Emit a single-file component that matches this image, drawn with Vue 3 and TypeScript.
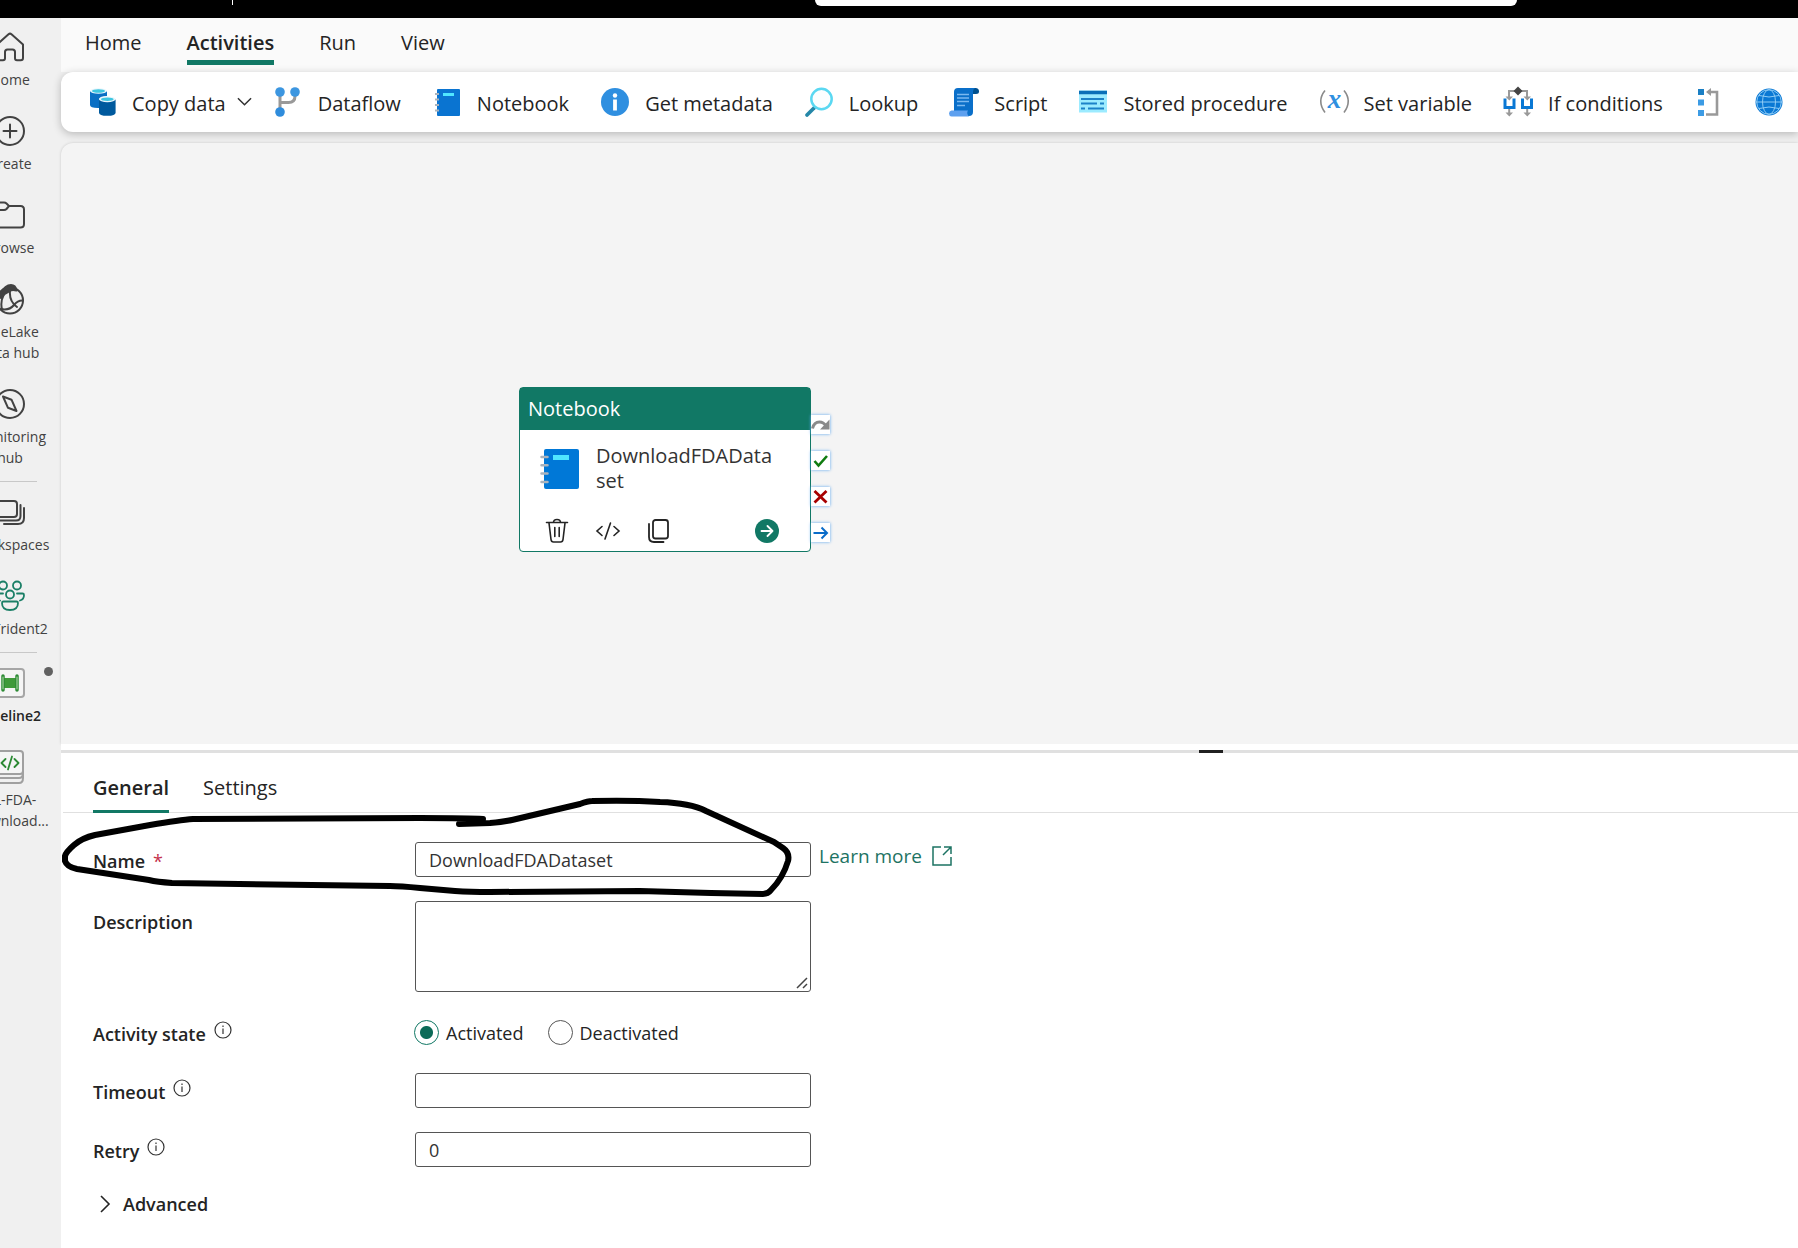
<script setup lang="ts">
import { ref } from 'vue'

type NavItem = { id: string; lines: string[]; active?: boolean; ruleAfter?: boolean }
type Tool = { id: string; label: string; menu?: boolean }

const navItems: NavItem[] = [
  { id: 'home', lines: ['Home'] },
  { id: 'create', lines: ['Create'] },
  { id: 'browse', lines: ['Browse'] },
  { id: 'onelake', lines: ['OneLake', 'data hub'] },
  { id: 'monitor', lines: ['Monitoring', 'hub'], ruleAfter: true },
  { id: 'workspaces', lines: ['Workspaces'] },
  { id: 'people', lines: ['FA-Trident2'], ruleAfter: true },
  { id: 'pipeline', lines: ['Pipeline2'], active: true },
  { id: 'notebook', lines: ['DL-FDA-', 'Download...'] },
]

const ribbonTabs = ['Home', 'Activities', 'Run', 'View']
const activeRibbon = ref('Activities')

const tools: Tool[] = [
  { id: 'copy', label: 'Copy data', menu: true },
  { id: 'dataflow', label: 'Dataflow' },
  { id: 'notebook', label: 'Notebook' },
  { id: 'info', label: 'Get metadata' },
  { id: 'lookup', label: 'Lookup' },
  { id: 'script', label: 'Script' },
  { id: 'stored', label: 'Stored procedure' },
  { id: 'variable', label: 'Set variable' },
  { id: 'if', label: 'If conditions' },
  { id: 'until', label: '' },
  { id: 'web', label: '' },
]

const panelTabs = ['General', 'Settings']
const activePanel = ref('General')

const name = ref('DownloadFDADataset')
const description = ref('')
const state = ref('activated')
const timeout = ref('')
const retry = ref('0')
</script>

<template>
  <div class="app">
    <header class="topbar">
      <span class="topbar-rule"></span>
      <input class="search" type="text" aria-label="Search" />
    </header>

    <div class="body">
      <aside class="sidebar">
        <nav class="nav">
          <template v-for="item in navItems" :key="item.id">
            <a href="#" class="nav-item" :class="{ active: item.active }">
              <svg class="nav-icon" viewBox="0 0 30 30" fill="none" stroke="#424242" stroke-width="2" stroke-linecap="round" stroke-linejoin="round">
                <path v-if="item.id === 'home'" d="M2 12.500 13.500 2.200q1.500-1.200 3 0L28 12.500V26q0 2.300-2.300 2.300H22q-2 0-2-2V20q0-2.500-2.500-2.500h-5Q10 17.500 10 20v6.300q0 2-2 2H4.300Q2 28.300 2 26Z" />
                <g v-else-if="item.id === 'create'">
                  <circle cx="15" cy="15" r="14" />
                  <path d="M15 8.500v13M8.500 15h13" />
                </g>
                <path v-else-if="item.id === 'browse'" d="M1 6q0-3.500 3.500-3.500H9q1.500 0 2.500 1L14 6h11.500Q29 6 29 9.500V24q0 3.500-3.500 3.500h-21Q1 27.500 1 24ZM1 10h8q1.500 0 2.500-1L14 6" />
                <g v-else-if="item.id === 'onelake'">
                  <circle cx="15" cy="16.500" r="13" />
                  <path d="M6 9Q10 1 16 1q4.500 0 5.500 5.500Q16 5 13 8 8 10 6 14Z" fill="#424242" />
                  <path d="M15 7q-1 10 7 16M9 10q-4 8-2 15M6 25q8 2 13-4 4-5 9-4.500" />
                </g>
                <g v-else-if="item.id === 'monitor'">
                  <circle cx="15" cy="15" r="14" />
                  <path d="m8 7.500 8.500 3.200 5 11.300-8.500-3.200Z" />
                </g>
                <g v-else-if="item.id === 'workspaces'">
                  <rect x="-2" y="4" width="24" height="16" rx="3" />
                  <path d="M25.500 8v11q0 4.500-4.500 4.500H5M29 11v10q0 6-6 6H9" />
                </g>
                <g v-else-if="item.id === 'people'" stroke="#1a7f66" stroke-width="1.800">
                  <circle cx="8" cy="4.500" r="4" />
                  <circle cx="22" cy="4.500" r="4" />
                  <circle cx="15" cy="13.500" r="4" />
                  <path d="M8.500 20.500h13q1.500 0 1.500 1.500 0 7-8 7t-8-7q0-1.500 1.500-1.500ZM22 12.500h5.500q1.500 0 1.500 1.500 0 4.500-4 5.500M8 12.500H2.500Q1 12.500 1 14q0 4.500 4 5.500" />
                </g>
                <g v-else-if="item.id === 'pipeline'">
                  <rect x="1" y="1" width="28" height="28" rx="3" fill="#f5f5f5" stroke="#a6a6a6" />
                  <rect x="9" y="10" width="12" height="10" fill="#3f9a3a" stroke="none" />
                  <path d="M8 8v14M22 8v14" stroke="#2c8a34" stroke-width="3.500" />
                  <path d="M8 9v12M22 9v12" stroke="#b9e0b0" stroke-width="1" />
                </g>
                <g v-else>
                  <path d="M1 26q1 5 5 5h18q4 0 4-5V12" stroke="#a0a0a0" />
                  <path d="M1 21q1 5 5 5h18q4 0 4-5" stroke="#a0a0a0" />
                  <rect x="1" y="-1" width="27" height="23" rx="3" fill="#f5f5f5" stroke="#a0a0a0" />
                  <path d="m10.500 7-4 4 4 4M19.500 7l4 4-4 4M17 4.500l-4 13" stroke="#2c8a34" stroke-width="1.800" />
                </g>
              </svg>
              <span v-for="line in item.lines" :key="line" class="nav-line">{{ line }}</span>
              <span v-if="item.active" class="unsaved"></span>
            </a>
            <hr v-if="item.ruleAfter" class="nav-rule" />
          </template>
        </nav>
      </aside>

      <main class="main">
        <div class="ribbon-tabs" role="tablist">
          <button v-for="tab in ribbonTabs" :key="tab" type="button" role="tab" class="ribbon-tab" :class="{ active: tab === activeRibbon }" :aria-selected="tab === activeRibbon" @click="activeRibbon = tab">{{ tab }}</button>
        </div>

        <div class="toolbar">
          <button v-for="tool in tools" :key="tool.id" type="button" class="tool" :class="{ menu: tool.menu }" :aria-label="tool.label || tool.id">
            <svg class="tool-icon" viewBox="0 0 28 28" fill="none">
              <g v-if="tool.id === 'copy'">
                <path d="M1 3v14q0 3 8 3h1V11q1-3 8-3V3Z" fill="#0a6fc4" />
                <ellipse cx="9.500" cy="3" rx="8.500" ry="2.800" fill="#e8f6fc" />
                <ellipse cx="9.500" cy="3" rx="6.500" ry="1.700" fill="#3ec6e0" />
                <path d="M10 11.500v13.200q0 3.100 8.300 3.100t8.300-3.100V11.500Z" fill="#005a9e" />
                <ellipse cx="18.300" cy="11.300" rx="8.300" ry="2.900" fill="#e8f6fc" />
                <ellipse cx="18.300" cy="11.300" rx="6.300" ry="1.700" fill="#3ec6e0" />
              </g>
              <g v-else-if="tool.id === 'dataflow'">
                <path d="M6 5v18M21 5v3q0 6.500-6.500 6.500H6" stroke="#999" stroke-width="3" />
                <circle cx="6" cy="4" r="4.800" fill="#3c96e0" />
                <circle cx="21" cy="4" r="4.800" fill="#3c96e0" />
                <circle cx="6" cy="24" r="4.800" fill="#2f8cdc" />
              </g>
              <g v-else-if="tool.id === 'notebook'">
                <rect x="4" y="1" width="23" height="27" rx="1" fill="#0a74d1" />
                <rect x="10" y="5" width="11" height="3" fill="#50e6ff" />
                <path d="M2 6h4M2 11.500h4M2 17h4M2 22.500h4" stroke="#a9b3bd" stroke-width="2" />
              </g>
              <g v-else-if="tool.id === 'info'">
                <circle cx="14" cy="14" r="14" fill="#2f8fe0" />
                <circle cx="14" cy="7.500" r="2.200" fill="#fff" />
                <path d="M14 11.500v11" stroke="#fff" stroke-width="3.800" />
              </g>
              <g v-else-if="tool.id === 'lookup'">
                <path d="M9 20 2 27" stroke="#2587a8" stroke-width="3.800" stroke-linecap="round" />
                <circle cx="16.500" cy="11" r="10.200" stroke="#5ad8f2" stroke-width="2.500" fill="#fbfeff" />
              </g>
              <g v-else-if="tool.id === 'script'">
                <path d="M23 0h2.500Q29 0 29 3.500 29 6 26 6h-3Z" fill="#00508f" />
                <path d="M4 4q0-4 4-4h17q-2 1-2 4v20q0 4-4 4H4Z" fill="#0a6fc9" />
                <path d="M1.500 22.500H18q-2 3 1 6H1.500Q-1 28-1 25.500t2.500-3Z" fill="#5ea0ef" />
                <path d="M7 6.500h12M7 10h12M7 13.500h12M7 17.500h8" stroke="#7ab8f0" stroke-width="1.500" />
              </g>
              <g v-else-if="tool.id === 'stored'">
                <rect x="0" y="2.500" width="28" height="22" fill="#9cebff" />
                <path d="M0 4.500h28" stroke="#0a6fb8" stroke-width="3.500" />
                <path d="M2 11h23M2 15.500h16M21 15.500h4M2 20.500h4M9 20.500h16" stroke="#1c82c8" stroke-width="1.800" />
              </g>
              <g v-else-if="tool.id === 'variable'">
                <path d="M5 2.500Q-3.500 13 5 24.500M24 2.500q8.500 10.500 0 22" stroke="#8a8a8a" stroke-width="1.600" />
                <text x="14.500" y="20" class="glyph-x" text-anchor="middle" fill="#2f8fe0">x</text>
              </g>
              <g v-else-if="tool.id === 'if'">
                <path d="M5 11V3h18v8" stroke="#999" stroke-width="2" />
                <path d="M1.500 8.500h7.500l-3.700 4ZM19.500 8.500H27l-3.700 4ZM1.500 24.500h7.500l-3.700 4ZM19.500 24.500H27l-3.700 4Z" fill="#999" />
                <path d="M5.200 19v7M23.200 19v7" stroke="#999" stroke-width="2" />
                <path d="M2.500 12H1v7.500h9V12H8.500M20 12h-1.500v7.500h9V12H26" stroke="#0a78d4" stroke-width="3" />
                <path d="m14-1.500 4.500 4.500-4.500 4.500-4.500-4.500Z" fill="#444" />
              </g>
              <g v-else-if="tool.id === 'until'">
                <path d="M3 1h6v6H3Z" fill="#1a7fc4" />
                <path d="M3 11.500h6v6H3ZM3 22h6v6H3Z" fill="#3c9be4" />
                <path d="M14 4h8v22.500H11" stroke="#999" stroke-width="2.600" />
                <path d="M16 0v8l-5-4Z" fill="#999" />
              </g>
              <g v-else>
                <circle cx="14" cy="14" r="13.500" fill="#0a78d4" />
                <g stroke="#8ecbf5" stroke-width="1">
                  <circle cx="14" cy="14" r="12.300" />
                  <ellipse cx="14" cy="14" rx="6.500" ry="12.300" />
                  <path d="M1 14h26M4 7.500q10 3 20 0M4 20.500q10-3 20 0" />
                </g>
              </g>
            </svg>
            <span v-if="tool.label" class="tool-label">{{ tool.label }}</span>
            <svg v-if="tool.menu" class="chevron" viewBox="0 0 16 10" fill="none" stroke="#333" stroke-width="1.600"><path d="m1 1 7 7 7-7" /></svg>
          </button>
        </div>

        <section class="canvas" aria-label="Pipeline canvas">
          <article class="node">
            <h2 class="node-head">Notebook</h2>
            <div class="node-body">
              <svg class="node-icon" viewBox="0 0 40 40" fill="none">
                <rect x="4" y="0" width="35" height="40" rx="2" fill="#0078d7" />
                <rect x="13" y="6" width="16" height="5" fill="#50e6ff" />
                <path d="M1.500 8h6M1.500 16.300h6M1.500 24.600h6M1.500 33h6" stroke="#a9b3bd" stroke-width="2.500" stroke-linecap="round" />
              </svg>
              <span class="node-name">{{ name }}</span>
            </div>
            <div class="node-actions">
              <button type="button" aria-label="Delete">
                <svg viewBox="0 0 24 24" fill="none" stroke="#242424" stroke-width="1.600" stroke-linecap="round"><path d="M1.500 3.500h21M8.500 3.500q0-3 3.500-3t3.500 3M4 4l2 16.500Q6.300 23 8.500 23h7q2.200 0 2.500-2.500L20 4M9.800 8.500v9M14.200 8.500v9" /></svg>
              </button>
              <button type="button" aria-label="View code">
                <svg viewBox="0 0 24 24" fill="none" stroke="#242424" stroke-width="1.600" stroke-linecap="round"><path d="m6 7.500-5 4.500 5 4.500M18 7.500l5 4.500-5 4.500M14.500 4l-5.500 16" /></svg>
              </button>
              <button type="button" aria-label="Clone">
                <svg viewBox="0 0 24 24" fill="none" stroke="#242424" stroke-width="1.800" stroke-linecap="round"><rect x="6" y="1" width="15" height="18.500" rx="2.500" /><path d="M2 5v13q0 5 5 5h9.500" /></svg>
              </button>
              <button type="button" class="go" aria-label="Open">
                <svg viewBox="0 0 24 24" fill="none"><circle cx="12" cy="12" r="12" fill="#117865" /><path d="M6.500 12h11M12.500 7l5 5-5 5" stroke="#fff" stroke-width="1.800" stroke-linecap="round" stroke-linejoin="round" /></svg>
              </button>
            </div>
            <div class="ports">
              <svg class="port" viewBox="0 0 19 19" fill="none"><path d="M1.500 13.500Q3 7 8.500 7q4 0 6.500 4" stroke="#8a8a8a" stroke-width="3" /><path d="M18.500 4.500v10H9Z" fill="#8a8a8a" /></svg>
              <svg class="port" viewBox="0 0 19 19" fill="none"><path d="m3.500 10 4 4.500 8.500-9.500" stroke="#107c10" stroke-width="2.600" /></svg>
              <svg class="port" viewBox="0 0 19 19" fill="none"><path d="m3.500 4 12 11.500M15.500 4l-12 11.500" stroke="#a80000" stroke-width="2.800" /></svg>
              <svg class="port" viewBox="0 0 19 19" fill="none"><path d="M2.500 10h13M10.500 4.500l5.500 5.500-5.500 5.500" stroke="#0a6cc9" stroke-width="2" /></svg>
            </div>
          </article>
        </section>

        <div class="splitter"><span class="grip"></span></div>

        <section class="panel">
          <div class="panel-tabs" role="tablist">
            <button v-for="tab in panelTabs" :key="tab" type="button" role="tab" class="panel-tab" :class="{ active: tab === activePanel }" :aria-selected="tab === activePanel" @click="activePanel = tab">{{ tab }}</button>
          </div>

          <form class="form" @submit.prevent>
            <div class="row">
              <label class="label" for="f-name">Name <span class="required">*</span></label>
              <input id="f-name" v-model="name" class="field" type="text" />
              <a href="#" class="learn">Learn more
                <svg viewBox="0 0 20 20" fill="none" stroke="#1d7363" stroke-width="1.500"><path d="M9 1H1v18h18v-8M12 1h7v7M19 1l-8 8" /></svg>
              </a>
            </div>
            <div class="row top">
              <label class="label" for="f-desc">Description</label>
              <div class="area">
                <textarea id="f-desc" v-model="description" class="field"></textarea>
                <svg class="resize" viewBox="0 0 12 12" stroke="#444" stroke-width="1.500"><path d="M1 11 11 1M7 11l4-4" /></svg>
              </div>
            </div>
            <div class="row state" role="radiogroup" aria-label="Activity state">
              <span class="label">Activity state
                <svg class="hint" viewBox="0 0 18 18" fill="none" stroke="#333" stroke-width="1.200"><circle cx="9" cy="9" r="8" /><path d="M9 7.500v5.500M9 4.500v1.500" /></svg>
              </span>
              <label class="radio"><input v-model="state" type="radio" name="state" value="activated" />Activated</label>
              <label class="radio"><input v-model="state" type="radio" name="state" value="deactivated" />Deactivated</label>
            </div>
            <div class="row">
              <label class="label" for="f-timeout">Timeout
                <svg class="hint" viewBox="0 0 18 18" fill="none" stroke="#333" stroke-width="1.200"><circle cx="9" cy="9" r="8" /><path d="M9 7.500v5.500M9 4.500v1.500" /></svg>
              </label>
              <input id="f-timeout" v-model="timeout" class="field" type="text" />
            </div>
            <div class="row">
              <label class="label" for="f-retry">Retry
                <svg class="hint" viewBox="0 0 18 18" fill="none" stroke="#333" stroke-width="1.200"><circle cx="9" cy="9" r="8" /><path d="M9 7.500v5.500M9 4.500v1.500" /></svg>
              </label>
              <input id="f-retry" v-model="retry" class="field" type="text" />
            </div>
            <button type="button" class="advanced">
              <svg viewBox="0 0 10 18" fill="none" stroke="#242424" stroke-width="1.600"><path d="m1 1 8 8-8 8" /></svg>
              Advanced
            </button>
          </form>

          <!-- hand-drawn ring round the Name field -->
          <svg class="ink" viewBox="61 753 740 150" fill="none" stroke="#000" stroke-width="6" stroke-linecap="round" stroke-linejoin="round">
            <path d="M483 819 Q470 818 420 818 L193 819 Q180 820 150 825 L95 835 Q82 838 74 845 Q66 852 65 856 V861 Q67 867 77 869 L149 880 Q157 882 172 883 L390 886 Q400 886 420 888 L455 891 Q470 892 490 892 L640 891 L711 893 L763 894 Q768 894 771 890 Q783 878 788 861 Q790 853 783 848 L774 842 L706 811 Q690 803 660 802 Q630 800 592 801 Q588 801 580 804 L512 820 Q503 822 490 823 L459 824" />
          </svg>
        </section>
      </main>
    </div>
  </div>
</template>

<style>
body {
  margin: 0;
}
</style>

<style scoped>
.app {
  display: flex;
  flex-direction: column;
  min-height: 100vh;
  font-family: 'Open Sans', 'Noto Sans', sans-serif;
  font-size: 20px;
  line-height: 26px;
  color: #242424;
  background: #f0f0f0;
}
.app *,
.app *::before {
  box-sizing: border-box;
}
button {
  padding: 0;
  border: 0;
  background: none;
  font: inherit;
  color: inherit;
  white-space: nowrap;
}
a {
  text-decoration: none;
}
svg {
  flex: none;
  overflow: visible;
}

.topbar {
  display: flex;
  align-items: flex-start;
  height: 18px;
  padding-left: 232px;
  background: #000;
}
.topbar-rule {
  width: 1px;
  height: 5px;
  background: #fff;
}
.search {
  width: 45%;
  max-width: 702px;
  height: 6px;
  margin: 0 auto 0 582px;
  padding: 0;
  border: 0;
  border-radius: 0 0 6px 6px;
  background: #fff;
}

.body {
  display: flex;
  flex: 1;
}

.sidebar {
  flex: none;
  width: 61px;
  overflow: hidden;
}
.nav {
  width: 104px;
  margin-left: -42px;
}
.nav-item {
  position: relative;
  display: flex;
  flex-direction: column;
  align-items: center;
  padding: 14px 0 12px;
  font-size: 14px;
  line-height: 21px;
  color: #424242;
}
.nav-item.active {
  font-weight: 600;
  color: #242424;
}
.nav-icon {
  width: 30px;
  height: 30px;
  margin-bottom: 7px;
}
.nav-line {
  white-space: nowrap;
}
.nav-rule {
  width: 54px;
  height: 1px;
  margin: 1px auto;
  border: 0;
  background: #c8c8c8;
}
.unsaved {
  position: absolute;
  top: 13px;
  right: 9px;
  width: 9px;
  height: 9px;
  border-radius: 50%;
  background: #616161;
}

.main {
  display: flex;
  flex: 1;
  flex-direction: column;
  min-width: 0;
}
.ribbon-tabs {
  display: flex;
  gap: 45px;
  height: 54px;
  padding: 11px 24px 7px;
  background: #fafafa;
}
.ribbon-tab {
  display: flex;
  padding-top: 1px;
  border-bottom: 5px solid transparent;
}
.ribbon-tab.active {
  border-color: #117865;
  font-weight: 600;
}

.toolbar {
  display: flex;
  align-items: center;
  gap: 32px;
  height: 60px;
  padding-left: 28px;
  overflow: hidden;
  border-radius: 12px 0 0 12px;
  background: #fff;
  box-shadow: 0 2px 8px rgba(0, 0, 0, 0.24);
}
.tool {
  display: flex;
  align-items: center;
  gap: 16px;
}
.tool.menu {
  gap: 15px;
  margin-right: -10px;
}
.tool-label {
  padding-top: 3px;
}
.tool-icon {
  width: 28px;
  height: 28px;
}
.chevron {
  width: 15px;
  height: 10px;
  margin-left: -4px;
}
.glyph-x {
  font: italic 700 27px 'Liberation Serif', serif;
}

.canvas {
  position: relative;
  flex: 1;
  min-height: 420px;
  margin-top: 11px;
  border-radius: 12px 0 0 0;
  background: #f4f4f4;
  box-shadow: 0 0 3px rgba(0, 0, 0, 0.16);
}
.node {
  position: absolute;
  top: 244px;
  left: 458px;
  width: 292px;
  border: 1px solid #117865;
  border-radius: 4px;
  background: #fff;
}
.node-head {
  margin: 0;
  padding: 8px;
  font-size: 20px;
  font-weight: 400;
  color: #fff;
  background: #117865;
}
.node-body {
  display: flex;
  align-items: flex-start;
  gap: 16px;
  padding: 13px 32px 0 20px;
  color: #333;
}
.node-icon {
  width: 40px;
  height: 40px;
  margin-top: 6px;
}
.node-name {
  line-height: 25px;
  word-break: break-all;
}
.node-actions {
  display: flex;
  gap: 27px;
  padding: 26px 31px 8px 25px;
}
.node-actions button,
.node-actions svg {
  display: block;
  width: 24px;
  height: 24px;
}
.node-actions .go {
  margin-left: auto;
}
.ports {
  position: absolute;
  top: 27px;
  left: 291px;
  display: flex;
  flex-direction: column;
  gap: 17px;
}
.port {
  width: 19px;
  height: 19px;
  background: #fff;
  box-shadow: 0 0 3px #5aa5ee;
}

.splitter {
  display: flex;
  height: 9px;
  padding: 6px 0 0 1138px;
  background: linear-gradient(#fff 6px, #e0e0e0 6px);
  z-index: 1;
}
.grip {
  width: 24px;
  height: 3px;
  background: #202020;
}

.panel {
  position: relative;
  padding-bottom: 31px;
  background: #fff;
}
.panel-tabs {
  display: flex;
  gap: 34px;
  height: 60px;
  margin-left: 2px;
  padding: 22px 30px 0;
  border-bottom: 1px solid #e0e0e0;
}
.panel-tab {
  display: flex;
  height: 38px;
  border-bottom: 3px solid transparent;
}
.panel-tab.active {
  border-color: #117865;
  font-weight: 600;
}
.form {
  display: flex;
  flex-direction: column;
  gap: 24px;
  padding: 29px 32px 0;
  font-size: 18px;
}
.row {
  display: flex;
  align-items: center;
}
.row.top {
  align-items: flex-start;
}
.row.state {
  height: 33px;
}
.label {
  display: flex;
  flex: none;
  gap: 8px;
  width: 322px;
  padding-top: 3px;
  font-weight: 600;
}
.top .label {
  padding-top: 8px;
}
.required {
  font-weight: 400;
  color: #c4314b;
}
.hint {
  width: 18px;
  height: 18px;
}
.field {
  width: 396px;
  height: 35px;
  padding: 0 13px;
  border: 1px solid #555;
  border-radius: 3px;
  font: inherit;
  color: #333;
  background: #fff;
}
.area {
  position: relative;
  display: flex;
}
textarea.field {
  height: 91px;
  resize: none;
}
.resize {
  position: absolute;
  right: 3px;
  bottom: 3px;
  width: 12px;
  height: 12px;
}
.learn {
  display: flex;
  align-items: center;
  gap: 10px;
  margin: 0 0 8px 8px;
  font-size: 19px;
  color: #1d7363;
}
.learn svg {
  width: 20px;
  height: 20px;
}
.radio {
  display: flex;
  align-items: center;
  gap: 7px;
  margin: 0 25px 0 -1px;
}
.radio input {
  display: flex;
  width: 25px;
  height: 25px;
  margin: 0;
  border: 1px solid #555;
  border-radius: 50%;
  appearance: none;
}
.radio input:checked {
  border-color: #117865;
  background: radial-gradient(circle, #0c6b58 6px, transparent 7px);
}
.advanced {
  display: flex;
  align-items: center;
  align-self: flex-start;
  gap: 13px;
  margin-left: 7px;
  font-weight: 600;
}
.advanced svg {
  width: 10px;
  height: 18px;
}
.ink {
  position: absolute;
  top: 0;
  left: 0;
  width: 740px;
  height: 150px;
  pointer-events: none;
}
</style>
